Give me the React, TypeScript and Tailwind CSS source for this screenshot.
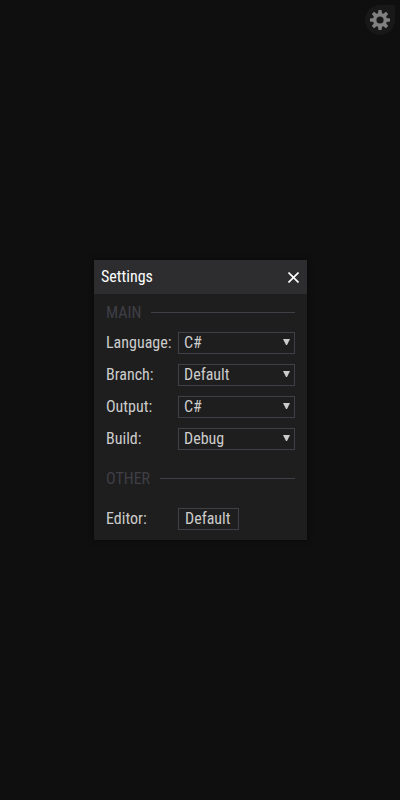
import { useState } from "react";

type Field = { id: string; label: string; options: string[] };

const fields: Field[] = [
  { id: "language", label: "Language:", options: ["C#", "Visual Basic", "F#"] },
  { id: "branch", label: "Branch:", options: ["Default"] },
  { id: "output", label: "Output:", options: ["C#", "IL"] },
  { id: "build", label: "Build:", options: ["Debug", "Release"] },
];

function GearIcon() {
  return (
    <svg viewBox="0 0 20 20" className="size-5" aria-hidden="true">
      <g fill="#808080">
        {[0, 45, 90, 135].map((angle) => (
          <path key={angle} d="M8.5 0h3l.6 4v12l-.6 4h-3l-.6-4V4z" transform={`rotate(${angle} 10 10)`} />
        ))}
        <circle cx="10" cy="10" r="7" />
      </g>
      <circle cx="10" cy="10" r="3.6" fill="#181818" />
    </svg>
  );
}

function SectionTitle({ children }: { children: string }) {
  return (
    <h2 className="flex h-[29px] items-center gap-2.5 text-[#3f3f46] after:h-px after:flex-1 after:bg-[#3f3f46]">
      {children}
    </h2>
  );
}

function SelectRow({ id, label, options }: Field) {
  return (
    <div className="flex h-8 items-center">
      <label htmlFor={id} className="w-[72px] shrink-0">
        {label}
      </label>
      <div className="relative flex-1">
        <select
          id={id}
          className="block h-[22px] w-full appearance-none border border-[#3f3f46] bg-[#1e1e1e] pr-5 pl-[5px] leading-5 outline-none"
        >
          {options.map((option) => (
            <option key={option}>{option}</option>
          ))}
        </select>
        <svg viewBox="0 0 7 6" className="pointer-events-none absolute top-[7px] right-[5px] h-1.5 w-[7px]" aria-hidden="true">
          <path d="M0 0h7L4 6H3z" fill="#ccc" />
        </svg>
      </div>
    </div>
  );
}

export default function App() {
  const [open, setOpen] = useState(true);

  return (
    <main className="flex min-h-screen items-center justify-center bg-[#0f0f0f] pl-px font-['Roboto_Condensed','Roboto',sans-serif] text-base leading-5 text-[#ccc]">
      <button
        type="button"
        aria-label="Open settings"
        onClick={() => setOpen(true)}
        className="fixed top-[5px] right-[5px] flex size-[30px] items-center justify-center rounded-full rounded-tr-none bg-[#181818]"
      >
        <GearIcon />
      </button>
      {open && (
        <section role="dialog" aria-labelledby="settings-title" className="w-[213px] bg-[#1e1e1e] shadow-[0_0_5px_#0009]">
          <header className="flex h-[34px] items-center justify-between bg-[#2d2d30] px-[7px] text-white">
            <h1 id="settings-title">Settings</h1>
            <button type="button" aria-label="Close" onClick={() => setOpen(false)} className="flex h-5 items-center pt-px pr-px">
              <svg viewBox="0 0 11 11" className="size-[11px]" aria-hidden="true">
                <path d="M.5 .5l10 10M10.5 .5l-10 10" stroke="#fff" strokeWidth="1.6" />
              </svg>
            </button>
          </header>
          <div className="px-3 pt-1 pb-[5px]">
            <SectionTitle>MAIN</SectionTitle>
            {fields.map((field) => (
              <SelectRow key={field.id} {...field} />
            ))}
            <div className="pt-[9px] pb-2.5">
              <SectionTitle>OTHER</SectionTitle>
            </div>
            <div className="flex h-8 items-center">
              <span id="editor-label" className="w-[72px] shrink-0">
                Editor:
              </span>
              <button
                type="button"
                aria-describedby="editor-label"
                className="h-[22px] min-w-[61px] border border-[#3f3f46] px-1.5 text-left leading-5"
              >
                Default
              </button>
            </div>
          </div>
        </section>
      )}
    </main>
  );
}
